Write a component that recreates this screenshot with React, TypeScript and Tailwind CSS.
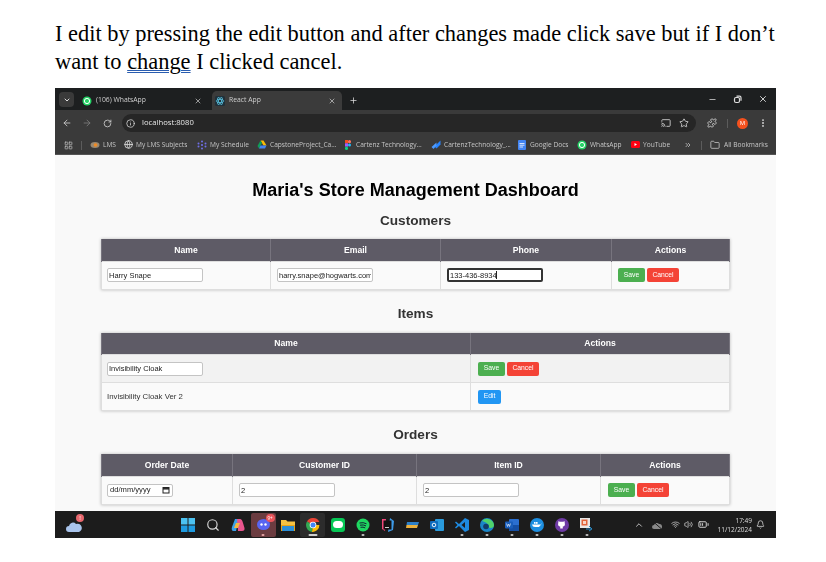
import React from "react";
import {
  ArrowLeft, ArrowRight, RotateCw, Info, Star, Puzzle, EllipsisVertical, X, Plus, Minus, ChevronDown,
  ChevronUp, ChevronsRight, Folder, LayoutGrid, Bell, Search, Globe, Wifi, Volume2, BatteryMedium, Cast,
} from "lucide-react";

const Wa = ({ s = 10 }: { s?: number }) => (
  <svg width={s} height={s} viewBox="0 0 10 10" className="shrink-0">
    <circle cx="5" cy="5" r="4.5" fill="#25d366" />
    <circle cx="5" cy="5" r="2.6" fill="none" stroke="#fff" strokeWidth="1" />
  </svg>
);

const Tab = ({ active, icon, label, width }: { active?: boolean; icon: React.ReactNode; label: string; width: string }) => (
  <div className={`flex items-center h-[19px] pl-[3px] pr-[4px] gap-[4px] ${width} ${active ? "bg-[#3b3b3b] rounded-t-[5px]" : ""}`}>
    <span className="flex w-[10px] justify-center">{icon}</span>
    <span className="flex-1 text-[6.8px] text-[#cfcfcf] truncate">{label}</span>
    <X size={8} color="#d5d5d5" strokeWidth={2} className="mr-[2px]" />
  </div>
);

const Bm = ({ icon, label, w }: { icon: React.ReactNode; label: string; w: string }) => (
  <div className={`flex items-center gap-[3px] shrink-0 ${w}`}>
    <span className="flex w-[10px] justify-center shrink-0">{icon}</span>
    <span className="text-[6.6px] text-[#c6c6c6] whitespace-nowrap overflow-hidden">{label}</span>
  </div>
);

const Th = ({ children, w }: { children: React.ReactNode; w: string }) => (
  <th className={`${w} h-[22px] bg-[#5e5b66] text-white text-[8.6px] font-bold text-center border-x border-[#77747e] p-0 pt-[1px]`}>{children}</th>
);
const Td = ({ children, cls = "px-[6px]" }: { children: React.ReactNode; cls?: string }) => (
  <td className={`border border-[#dedede] text-left text-[7.8px] text-[#333] ${cls}`}>{children}</td>
);
const Field = ({ value, focus, w = "w-[96px]" }: { value: string; focus?: boolean; w?: string }) => (
  <input
    readOnly
    value={value}
    className={`block ${w} h-[14px] bg-white px-[1px] text-[7.5px] text-[#222] rounded-[2px] outline-none ${focus ? "border-2 border-[#333]" : "border border-[#c4c4c4]"}`}
  />
);
const Btn = ({ label, color, w }: { label: string; color: string; w: string }) => (
  <button className={`${color} ${w} h-[14px] rounded-[2px] text-white text-[6.8px] leading-none`}>{label}</button>
);
const Actions = () => (
  <div className="flex gap-[2px]">
    <Btn label="Save" color="bg-[#4caf50]" w="w-[27px]" />
    <Btn label="Cancel" color="bg-[#f44336]" w="w-[32px]" />
  </div>
);

const Tb = ({ children, cls = "", dot }: { children: React.ReactNode; cls?: string; dot?: string }) => (
  <div className={`relative w-[24.9px] h-[24px] shrink-0 flex items-center justify-center rounded-[2px] ${cls}`}>
    {children}
    {dot && <span className={`absolute bottom-[1px] left-1/2 -translate-x-1/2 h-[1.5px] rounded-full ${dot}`} />}
  </div>
);

export default function App() {
  return (
    <div className="w-[826px] h-[562px] bg-white overflow-hidden pt-[20px] pl-[55px]" style={{ fontFamily: "'Open Sans', 'Liberation Sans', sans-serif" }}>
      <p className="w-[725px] h-[68px] text-[22.4px] leading-[28px] text-black" style={{ fontFamily: "'Liberation Serif', serif" }}>
        I edit by pressing the edit button and after changes made click save but if I don’t want to{" "}
        <span className="underline decoration-double decoration-[#2a5db0] decoration-1">change</span> I clicked cancel.
      </p>

      <div className="w-[721px] h-[450px] flex flex-col overflow-hidden blur-[0.35px]">
        {/* tab strip */}
        <div className="h-[22px] bg-[#1d1f20] flex items-end pl-[4px] relative shrink-0">
          <div className="w-[15px] h-[15px] mb-[3px] rounded-[4px] bg-[#3a3a3a] flex items-center justify-center mr-[5px]">
            <ChevronDown size={8} color="#ddd" strokeWidth={3} />
          </div>
          <Tab icon={<Wa />} label="(106) WhatsApp" width="w-[129px]" />
          <div className="w-[4px]" />
          <Tab active width="w-[130px]" label="React App" icon={
            <svg width="10" height="10" viewBox="0 0 10 10">
              <rect width="10" height="10" rx="1.5" fill="#20303a" />
              <g fill="none" stroke="#61dafb" strokeWidth=".6">
                <ellipse cx="5" cy="5" rx="4" ry="1.6" />
                <ellipse cx="5" cy="5" rx="4" ry="1.6" transform="rotate(60 5 5)" />
                <ellipse cx="5" cy="5" rx="4" ry="1.6" transform="rotate(120 5 5)" />
              </g>
            </svg>
          } />
          <Plus size={9} color="#ddd" strokeWidth={2} className="ml-[7px] mb-[5px]" />
          <div className="flex-1" />
          <div className="flex items-center gap-[16px] pr-[8px] mb-[6px]">
            <Minus size={9} color="#ddd" strokeWidth={2} />
            <svg width="9" height="9" viewBox="0 0 9 9" fill="none" stroke="#ddd" strokeWidth="1.2">
              <rect x="1.5" y="2.5" width="5" height="5" rx="1.5" />
              <path d="M3.5 1.2h3a1.5 1.5 0 0 1 1.5 1.5v3" />
            </svg>
            <X size={10} color="#eee" strokeWidth={2} />
          </div>
        </div>

        {/* toolbar */}
        <div className="h-[26px] bg-[#3a3a3a] flex items-center pl-[7px] pr-[8px] shrink-0">
          <ArrowLeft size={10} color="#cfcfcf" strokeWidth={2} />
          <ArrowRight size={10} color="#7d7d7d" strokeWidth={2} className="ml-[10px]" />
          <RotateCw size={9} color="#cfcfcf" strokeWidth={2.2} className="ml-[11px]" />
          <div className="ml-[10px] w-[574px] h-[18px] rounded-full bg-[#262626] flex items-center pl-[4px] pr-[7px]">
            <Info size={9} color="#ddd" strokeWidth={2} />
            <span className="ml-[7px] text-[7.7px] font-medium text-[#e6e6e6]">localhost:8080</span>
            <div className="flex-1" />
            <Cast size={10} color="#d8d8d8" strokeWidth={2} />
            <Star size={10} color="#d8d8d8" strokeWidth={2} className="ml-[8px]" />
          </div>
          <Puzzle size={10} color="#d8d8d8" strokeWidth={2} className="ml-[11px]" />
          <div className="w-px h-[9px] bg-[#5c5c5c] ml-[10px]" />
          <div className="ml-[9px] w-[11px] h-[11px] rounded-full bg-[#f4511e] text-white text-[6px] flex items-center justify-center">M</div>
          <EllipsisVertical size={10} color="#d8d8d8" strokeWidth={2.5} className="ml-[10px]" />
        </div>

        {/* bookmarks */}
        <div className="h-[19px] bg-[#3a3a3a] flex items-center pl-[9px] border-b border-[#555] shrink-0">
          <LayoutGrid size={9} color="#bbb" strokeWidth={2} />
          <div className="w-px h-[9px] bg-[#5c5c5c] ml-[8px] mr-[8px]" />
          <Bm w="w-[33px]" label="LMS" icon={<svg width="10" height="8" viewBox="0 0 10 8"><ellipse cx="5" cy="4" rx="4.5" ry="3" fill="#9a8a72" /><circle cx="5.5" cy="4" r="1.8" fill="#f08a24" /></svg>} />
          <Bm w="w-[74px]" label="My LMS Subjects" icon={<Globe size={9} color="#ddd" strokeWidth={2.2} />} />
          <Bm w="w-[60px]" label="My Schedule" icon={<svg width="10" height="10" viewBox="0 0 10 10" fill="#6f6fe8"><circle cx="5" cy="1.5" r="1" /><circle cx="5" cy="8.5" r="1" /><circle cx="1.5" cy="3.5" r="1" /><circle cx="8.5" cy="3.5" r="1" /><circle cx="1.5" cy="6.5" r="1" /><circle cx="8.5" cy="6.5" r="1" /><circle cx="5" cy="5" r="1.1" /></svg>} />
          <Bm w="w-[86px]" label="CapstoneProject_Ca..." icon={<svg width="10" height="9" viewBox="0 0 10 9"><path d="M3.5 0.5h3l3 5h-3z" fill="#fbbc04" /><path d="M3.5 0.5L.5 6l1.5 2.5 3-5.5z" fill="#0f9d58" /><path d="M2 8.5h6l1.5-3h-6z" fill="#4285f4" /></svg>} />
          <Bm w="w-[88px]" label="Cartenz Technology..." icon={<svg width="6" height="10" viewBox="0 0 6 10"><rect width="3" height="3.3" fill="#f24e1e" /><rect x="3" width="3" height="3.3" rx="1.5" fill="#ff7262" /><rect y="3.3" width="3" height="3.3" fill="#a259ff" /><circle cx="4.5" cy="5" r="1.5" fill="#1abcfe" /><rect y="6.6" width="3" height="3.4" rx="1.5" fill="#0acf83" /></svg>} />
          <Bm w="w-[86px]" label="CartenzTechnology_..." icon={<svg width="10" height="10" viewBox="0 0 10 10" fill="#2684ff"><path d="M9.5.5v4L5.5 8.5 3.5 6.500z" /><path d="M5.500 2.500v3L2.500 9 .5 7z" fill="#4c9aff" /></svg>} />
          <Bm w="w-[60px]" label="Google Docs" icon={<svg width="8" height="10" viewBox="0 0 8 10"><rect width="8" height="10" rx="1" fill="#4285f4" /><path d="M1.500 3.500h5M1.500 5.200h5M1.500 7h3.500" stroke="#fff" strokeWidth=".8" /></svg>} />
          <Bm w="w-[53px]" label="WhatsApp" icon={<Wa />} />
          <Bm w="w-[54px]" label="YouTube" icon={<svg width="9" height="7" viewBox="0 0 9 7"><rect width="9" height="7" rx="1.500" fill="#f01" /><path d="M3.500 2l2.500 1.500L3.500 5z" fill="#fff" /></svg>} />
          <ChevronsRight size={8} color="#cfcfcf" strokeWidth={2.2} />
          <div className="w-px h-[9px] bg-[#5c5c5c] ml-[9px] mr-[8px]" />
          <Folder size={10} color="#cfcfcf" strokeWidth={1.8} />
          <span className="ml-[4px] text-[6.6px] text-[#c6c6c6] whitespace-nowrap">All Bookmarks</span>
        </div>

        {/* page */}
        <div className="h-[356px] shrink-0 bg-[#f9f9f9] overflow-hidden px-[46px] pt-[23px]" style={{ fontFamily: "'Liberation Sans', sans-serif" }}>
          <h1 className="text-[18px] leading-[24px] font-bold text-black text-center">Maria's Store Management Dashboard</h1>
          <h2 className="mt-[9px] h-[22px] text-[13.6px] leading-[20px] font-bold text-[#333] text-center">Customers</h2>
          <table className="table-fixed w-[628px] mt-[6px] border-collapse bg-[#fafafa] shadow-[0_0_3px_rgba(0,0,0,0.25)]">
            <thead>
              <tr>
                <Th w="w-[169px]">Name</Th>
                <Th w="w-[170px]">Email</Th>
                <Th w="w-[171px]">Phone</Th>
                <Th w="w-[118px]">Actions</Th>
              </tr>
            </thead>
            <tbody>
              <tr className="h-[28px]">
                <Td cls="pl-[5px]"><Field value="Harry Snape" /></Td>
                <Td><Field value="harry.snape@hogwarts.com" /></Td>
                <Td>
                  <div className="relative w-[96px]">
                    <Field value="133-436-8934" focus />
                    <span className="absolute left-[49px] top-[3px] w-px h-[8px] bg-[#222]" />
                  </div>
                </Td>
                <Td cls="pl-[6px]"><Actions /></Td>
              </tr>
            </tbody>
          </table>

          <h2 className="mt-[14px] h-[21px] text-[13.6px] leading-[20px] font-bold text-[#333] text-center">Items</h2>
          <table className="table-fixed w-[628px] mt-[8px] border-collapse bg-[#fafafa] shadow-[0_0_3px_rgba(0,0,0,0.25)]">
            <thead>
              <tr>
                <Th w="w-[369px]">Name</Th>
                <Th w="w-[259px]">Actions</Th>
              </tr>
            </thead>
            <tbody>
              <tr className="h-[28px] bg-[#f2f2f2]">
                <Td cls="pl-[5px]"><Field value="Invisibility Cloak" /></Td>
                <Td cls="pl-[7px]"><Actions /></Td>
              </tr>
              <tr className="h-[28px]">
                <Td cls="pl-[5px]">Invisibility Cloak Ver 2</Td>
                <Td cls="pl-[7px]"><Btn label="Edit" color="bg-[#2196f3]" w="w-[23px]" /></Td>
              </tr>
            </tbody>
          </table>

          <h2 className="mt-[14px] h-[21px] text-[13.6px] leading-[20px] font-bold text-[#333] text-center">Orders</h2>
          <table className="table-fixed w-[628px] mt-[8px] border-collapse bg-[#fafafa] shadow-[0_0_3px_rgba(0,0,0,0.25)]">
            <thead>
              <tr>
                <Th w="w-[131px]">Order Date</Th>
                <Th w="w-[184px]">Customer ID</Th>
                <Th w="w-[184px]">Item ID</Th>
                <Th w="w-[129px]">Actions</Th>
              </tr>
            </thead>
            <tbody>
              <tr className="h-[28px]">
                <Td cls="pl-[5px]">
                  <div className="w-[66px] h-[13px] bg-white border border-[#c4c4c4] rounded-[2px] flex items-center justify-between px-[2px] text-[7.6px] text-[#222]">
                    <span>dd/mm/yyyy</span>
                    <svg width="8" height="8" viewBox="0 0 8 8" fill="none" stroke="#222" strokeWidth="1"><rect x="1" y="1.5" width="6" height="5.500" /><path d="M1 2.800h6" strokeWidth="1.500" /></svg>
                  </div>
                </Td>
                <Td><Field value="2" /></Td>
                <Td><Field value="2" /></Td>
                <Td cls="pl-[7px]"><Actions /></Td>
              </tr>
            </tbody>
          </table>
        </div>

        {/* taskbar */}
        <div className="h-[27px] shrink-0 bg-[#1c1c1c] flex items-center relative">
          <div className="relative ml-[11px] w-[16px] h-[16px]">
            <svg width="16" height="14" viewBox="0 0 16 14" className="mt-[2px]"><path d="M3 13a3 3 0 0 1 0-6 4 4 0 0 1 7-2 3.500 3.500 0 0 1 3 8z" fill="#a9c4ec" /></svg>
            <span className="absolute -top-[3px] right-[-2px] w-[8px] h-[8px] rounded-full bg-[#e8686e] text-white text-[6px] leading-[8px] text-center">!</span>
          </div>
          <div className="ml-[94px] flex items-center">
            <Tb><svg width="14" height="14" viewBox="0 0 14 14"><rect width="6.500" height="6.500" fill="#4cc2f1" /><rect x="7.500" width="6.500" height="6.500" fill="#4cc2f1" /><rect y="7.500" width="6.500" height="6.500" fill="#1e9be0" /><rect x="7.500" y="7.500" width="6.500" height="6.500" fill="#1e9be0" /></svg></Tb>
            <Tb><Search size={14} color="#d8d8d8" strokeWidth={2} /></Tb>
            <Tb><svg width="14" height="14" viewBox="0 0 14 14"><path d="M4 1h4L5 13H2.500Q0 13 1 9z" fill="#3aa0e8" /><path d="M6 1h3q2 0 3 4l1.500 5Q14 13 11 13H7z" fill="#e8558e" /><path d="M5 5h4l-2 5H3z" fill="#f5b642" /></svg></Tb>
            <Tb cls="bg-[#6b3c40]" dot="w-[3px] bg-[#e0a0a0]">
              <svg width="13" height="11" viewBox="0 0 13 11"><ellipse cx="6.500" cy="5.500" rx="6.500" ry="5.500" fill="#5865f2" /><circle cx="4.500" cy="5.500" r="1.200" fill="#fff" /><circle cx="8.500" cy="5.500" r="1.200" fill="#fff" /></svg>
              <span className="absolute top-[1px] right-[1px] w-[9px] h-[8px] rounded-full bg-[#e8555a] text-white text-[4.500px] leading-[8px] text-center">9+</span>
            </Tb>
            <Tb><svg width="14" height="12" viewBox="0 0 14 12"><path d="M0 1h5l1.500 1.500H14V12H0z" fill="#f5c242" /><rect y="6" width="14" height="6" fill="#e8a317" /><rect x="1" y="7" width="12" height="5" fill="#2b8fd8" /></svg></Tb>
            <Tb cls="bg-[#2c2c2c]" dot="w-[9px] bg-[#cfcfcf]">
              <svg width="14" height="14" viewBox="0 0 14 14"><path d="M7 7L1 3.500A7 7 0 0 1 13.400 4H7z" fill="#ea4335" /><path d="M7 7l-6-3.500A7 7 0 0 0 6 14z" fill="#34a853" /><path d="M7 7h6.400A7 7 0 0 1 6 14z" fill="#fbbc04" /><circle cx="7" cy="7" r="3.300" fill="#fff" /><circle cx="7" cy="7" r="2.500" fill="#4285f4" /></svg>
            </Tb>
            <Tb><div className="w-[14px] h-[14px] rounded-[3px] bg-[#06c755] flex items-center justify-center"><div className="w-[10px] h-[7px] rounded-full bg-white" /></div></Tb>
            <Tb dot="w-[3px] bg-[#bbb]"><svg width="14" height="14" viewBox="0 0 14 14"><circle cx="7" cy="7" r="6.500" fill="#1ed760" /><path d="M3.500 5q4-1 7 .8M4 7.200q3.500-.8 6 .7M4.500 9.300q2.700-.6 4.700.6" stroke="#123" strokeWidth="1" fill="none" /></svg></Tb>
            <Tb><svg width="13" height="14" viewBox="0 0 13 14"><path d="M1 1l4 0-1 12-3-2z" fill="#f2487a" /><path d="M9 0l4 3-1 9-5 2z" fill="#3e9be8" /><rect x="2.500" y="2.500" width="8" height="9" fill="#111" /><rect x="4" y="9" width="4" height=".8" fill="#fff" /></svg></Tb>
            <Tb><svg width="13" height="8" viewBox="0 0 13 8"><path d="M1 1h12L12 4H.5z" fill="#2c80c9" /><path d="M.5 4H12l-1 3H0z" fill="#eab03d" /></svg></Tb>
            <Tb><svg width="14" height="12" viewBox="0 0 14 12"><rect x="5" width="9" height="12" rx="1" fill="#2a9bdd" /><rect y="2" width="8" height="8" rx="1" fill="#0f6cbd" /><circle cx="4" cy="6" r="1.800" fill="none" stroke="#fff" strokeWidth=".9" /></svg></Tb>
            <Tb dot="w-[3px] bg-[#bbb]"><svg width="14" height="14" viewBox="0 0 14 14"><path d="M10 0l4 2v10l-4 2-6-6-3 2.500L0 9.500 2.500 7 0 4.500 1 3.500 4 6z" fill="#1e8ae0" /><path d="M10 4L6.500 7 10 10z" fill="#1c1c1c" /></svg></Tb>
            <Tb dot="w-[3px] bg-[#bbb]"><svg width="14" height="14" viewBox="0 0 14 14"><circle cx="7" cy="7" r="7" fill="#1a86c8" /><path d="M2 3a7 7 0 0 1 12 4q0 3-3.500 3Q8 10 9 7.500 7 4 2 3z" fill="#4fd36b" /><circle cx="6" cy="8.500" r="2.800" fill="#123c6a" /></svg></Tb>
            <Tb dot="w-[3px] bg-[#bbb]"><svg width="14" height="12" viewBox="0 0 14 12"><rect x="4" width="10" height="12" rx="1" fill="#2b6fd0" /><rect x="4" y="6" width="10" height="6" fill="#154fa5" /><rect y="2.500" width="8" height="7" rx="1" fill="#1a5ebb" /><path d="M1.500 4.500l1 3 1-2.500 1 2.500 1-3" stroke="#fff" strokeWidth=".6" fill="none" /></svg></Tb>
            <Tb dot="w-[3px] bg-[#bbb]"><div className="w-[14px] h-[14px] rounded-full bg-[#1d8fe1] flex items-center justify-center"><svg width="10" height="7" viewBox="0 0 10 7"><path d="M0 3.500h8.500Q10 3 9.500 2 9 4.500 7 6H3Q.5 6 0 3.500z" fill="#fff" /><rect x="2" y="1" width="1.600" height="1.800" fill="#fff" /><rect x="4" y="1" width="1.600" height="1.800" fill="#fff" /></svg></div></Tb>
            <Tb dot="w-[3px] bg-[#bbb]"><div className="w-[14px] h-[14px] rounded-full bg-[#6e3aa5] flex items-center justify-center"><svg width="9" height="9" viewBox="0 0 9 9"><path d="M1.500 1l1.200.8h3.600L7.500 1l.3 2.200Q8.500 6 5.800 6.500V8.500H3.200V6.500Q.5 6 1.200 3.200z" fill="#fff" /></svg></div></Tb>
            <Tb dot="w-[3px] bg-[#bbb]"><svg width="15" height="14" viewBox="0 0 15 14"><rect x="1" y="0" width="10" height="10" fill="#e8e8e8" /><rect x="2.500" y="1.500" width="6" height="6" fill="#e0633a" /><rect x="4" y="3" width="3" height="3" fill="#f6d4c6" /><path d="M7 11h5M10 8l3 3-3 2" stroke="#2a8ac4" strokeWidth="1" fill="none" /></svg></Tb>
          </div>
          <div className="flex-1" />
          <div className="flex items-center pr-[11px]">
            <ChevronUp size={10} color="#ddd" strokeWidth={2} />
            <svg width="10" height="8" viewBox="0 0 10 8" className="ml-[8px]"><path d="M2 8a2 2 0 0 1 0-4 3 3 0 0 1 5-1 2.500 2.500 0 0 1 1 5z" fill="#888" /><path d="M1 .5L9 7.500" stroke="#1c1c1c" strokeWidth="1" /></svg>
            <Wifi size={9} color="#cfcfcf" strokeWidth={2} className="ml-[9px]" />
            <Volume2 size={9} color="#cfcfcf" strokeWidth={2} className="ml-[4px]" />
            <BatteryMedium size={11} color="#dedede" strokeWidth={2} className="ml-[5px]" />
            <div className="ml-[7px] w-[36px] text-right text-[6.500px] leading-[9px] text-[#dedede]">
              <div>17:49</div>
              <div className="whitespace-nowrap">11/12/2024</div>
            </div>
            <Bell size={9} color="#dedede" strokeWidth={2} className="ml-[4px]" />
          </div>
        </div>
      </div>
    </div>
  );
}
